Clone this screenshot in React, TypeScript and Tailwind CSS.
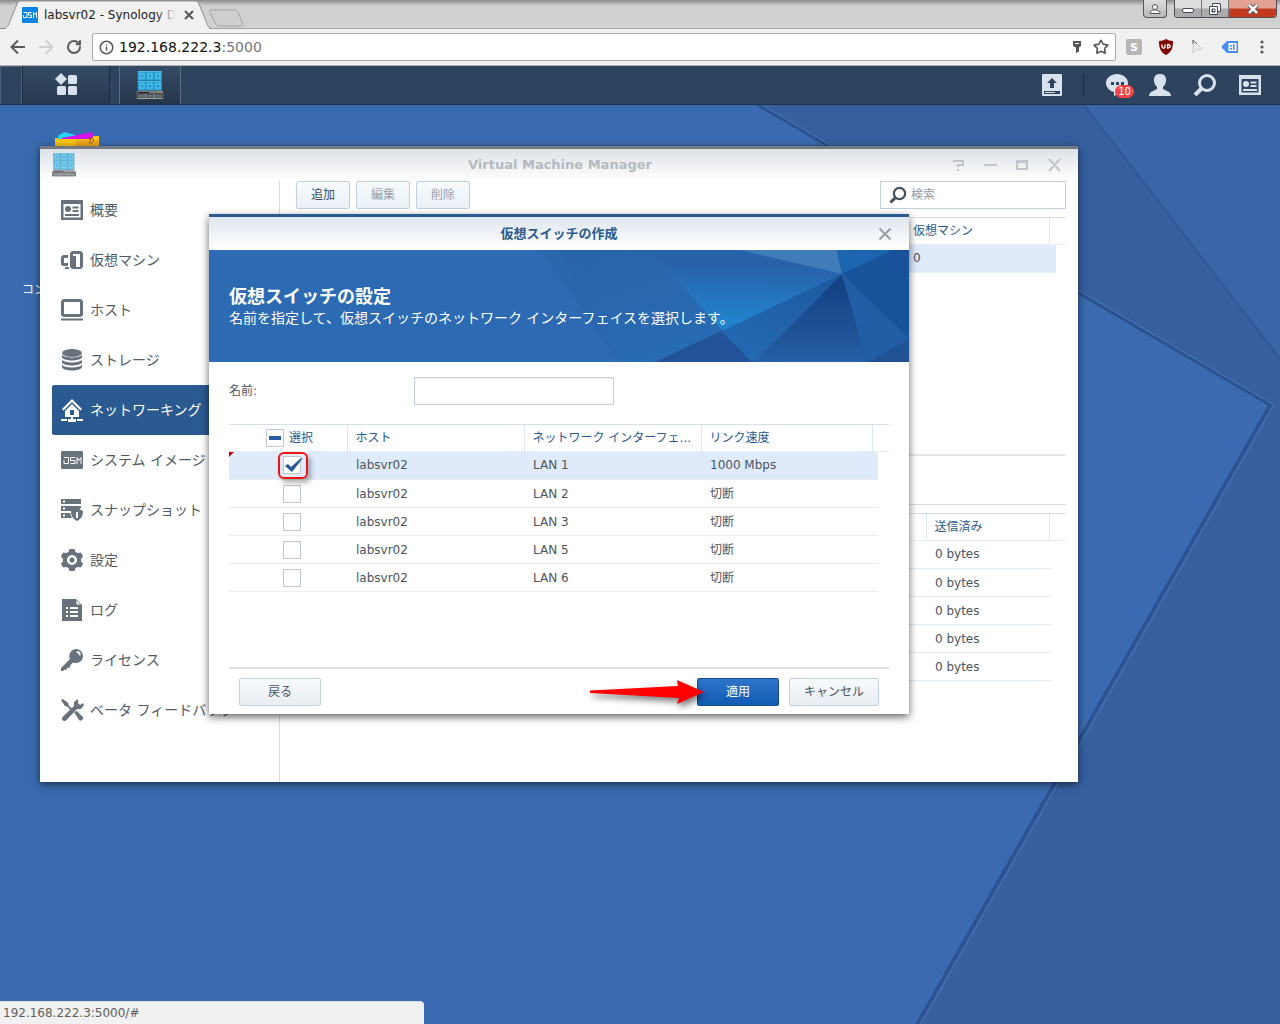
import { useState, type ReactNode } from 'react'
import { Star, RotateCw, Info } from 'lucide-react'
import clsx from 'clsx'

const interfaces = [
  { host: 'labsvr02', name: 'LAN 1', speed: '1000 Mbps' },
  { host: 'labsvr02', name: 'LAN 2', speed: '切断' },
  { host: 'labsvr02', name: 'LAN 3', speed: '切断' },
  { host: 'labsvr02', name: 'LAN 5', speed: '切断' },
  { host: 'labsvr02', name: 'LAN 6', speed: '切断' },
]

function ServerIcon({ className }: { className?: string }) {
  return (
    <svg viewBox="0 0 28 28" className={className}>
      {[0, 1].map(r => (
        <g key={r}>
          <rect x="2" y={r * 10} width="24" height="9.5" fill="#1b8fc4" />
          {[0, 1, 2].map(c => (
            <g key={c}>
              <rect x={2 + c * 8} y={r * 10} width="7.5" height="9" fill="#2fa9dc" stroke="#2594c6" strokeWidth="0.6" />
              <path d={`M${2 + c * 8} ${r * 10 + 0.5}h7.5`} stroke="#4cc0e6" />
              <rect x={4 + c * 8} y={r * 10 + 3} width="4" height="4" fill="#2598cb" stroke="#58c6ea" />
            </g>
          ))}
        </g>
      ))}
      <path d="M2 19.500h24l2 3H0z" fill="#777b7d" />
      <rect y="22" width="28" height="5" fill="#4b5054" />
      <path d="M2 21.500h11" stroke="#222" />
      <path d="M2 25h6M11 25h6M20 25h6" stroke="#8d9295" />
      <path d="M9.500 23v4M18.500 23v4" stroke="#a3a6a8" />
      <path d="M1 27.500h26" stroke="#a3a6a8" />
      <path d="M22 21h1M25 21h1" stroke="#d7df46" />
    </svg>
  )
}

function CardIcon({ className }: { className?: string }) {
  return (
    <svg viewBox="0 0 24 22" className={className} fill="currentColor">
      <path fillRule="evenodd" d="M1 1h22v20H1zM3.500 5v13.500h17V5z" />
      <circle cx="8" cy="10" r="3" />
      <path d="M12.500 7.500h6v2h-6zM12.500 11h6v2h-6zM5 15h14v2H5z" />
    </svg>
  )
}

function SearchIcon({ className }: { className?: string }) {
  return (
    <svg viewBox="0 0 24 24" className={className} fill="none" stroke="currentColor">
      <circle cx="14" cy="10" r="7.500" strokeWidth="3" />
      <path d="M8.500 15.500L2 22" strokeWidth="4" />
    </svg>
  )
}

const navIcons: Record<string, ReactNode> = {
  vm: (
    <>
      <path fillRule="evenodd" d="M12 2h9l2 2v14l-2 2h-9l-2-2V4zM13 5v2h3v11h4V5z" />
      <path d="M8 6H3L1 8v8l2 1h5v-3H4V9h4zM5 18h4v2H5z" />
    </>
  ),
  host: (
    <>
      <path fillRule="evenodd" d="M3 0h18l2 2v14l-2 2H3l-2-2V2zM4 3v12h16V3z" />
      <path d="M1 19.500h22v2H1z" />
    </>
  ),
  storage: (
    <>
      <ellipse cx="12" cy="4" rx="10" ry="4" />
      <path d="M2 5.500c2 4 18 4 20 0v3c-2 4-18 4-20 0zM2 10.500c2 4 18 4 20 0v3c-2 4-18 4-20 0zM2 15.500c2 4 18 4 20 0v3c-2 4-18 4-20 0z" />
    </>
  ),
  network: (
    <>
      <path d="M12 0l10 10-1.500 1.500L12 3l-8.500 8.500L2 10z" />
      <path fillRule="evenodd" d="M12 5l7 7v6H5v-6zM10 11v5h4v-5z" />
      <path d="M11 17h2v3h3v3H8v-3h3zM1 20h6v2H1zM17 20h6v2h-6z" />
    </>
  ),
  image: (
    <>
      <rect x="1" y="2" width="22" height="18" rx="1" />
      <path d="M4 8.500h4.500v6H4v-3.500M15 8.500h-4.500v3H15v3h-4.500M17 15V8.500l2 3 2-3V15" fill="none" stroke="#fff" />
    </>
  ),
  snapshot: (
    <>
      <path fillRule="evenodd" d="M1 0h20v5H1zM3 1.500v2h2v-2zM1 7h20v2l-5 3H1zM3 8.500v2h2v-2zM1 14h9l2 5H1zM3 15.500v2h2v-2z" />
      <path fillRule="evenodd" d="M17 9l6 3c0 5-2 8-6 10-4-2-6-5-6-10zM16 13v6h2v-6z" />
    </>
  ),
  gear: (
    <path
      fillRule="evenodd"
      d="M9.500 0h5l1 3 2.500 1 3-.5 2 4-2 2.500v2.500l2 2-2 4-3-.5-2.500 1-1 3h-5l-1-3-2.500-1-3 .5-2-4 2-2V10L1 7.500l2-4 3 .5 2.500-1zM12 6a5 5 0 1 0 0 10 5 5 0 0 0 0-10zM12 8.500a2.500 2.500 0 1 1 0 5 2.500 2.500 0 0 1 0-5z"
    />
  ),
  log: (
    <path
      fillRule="evenodd"
      d="M2 0h14l6 6v16H2zM16.500 1.500v4h4zM6 8v2h2V8zm4 0v2h8V8zm-4 4v2h2v-2zm4 0v2h8v-2zm-4 4v2h2v-2zm4 0v2h8v-2z"
    />
  ),
  key: (
    <path
      fillRule="evenodd"
      d="M16 0a7 7 0 0 1 0 14c-1 0-2 0-3-.5L10.500 16l-1 3-2-.5-1 2.500-2-.5L3 22H1v-3L10 10a7 7 0 0 1 6-10zm0 3a9 9 0 0 1 4 4c2-3-1-6-4-4z"
    />
  ),
  tools: (
    <>
      <path d="M18 0l-4 3v4L3 17.500c-3 3 1 6 3.500 3.500L17 10h4l3-4-1-2-3 2-2-2z" />
      <path d="M1 1l2-1 5 4 1 3 3 2-2 2-2-3-3-1zM14 13l3-1 6 6c1 2-2 5-4 3z" />
    </>
  ),
}

const navItems = [
  { label: '概要', icon: 'card' },
  { label: '仮想マシン', icon: 'vm' },
  { label: 'ホスト', icon: 'host' },
  { label: 'ストレージ', icon: 'storage' },
  { label: 'ネットワーキング', icon: 'network', active: true },
  { label: 'システム イメージ', icon: 'image' },
  { label: 'スナップショット', icon: 'snapshot' },
  { label: '設定', icon: 'gear' },
  { label: 'ログ', icon: 'log' },
  { label: 'ライセンス', icon: 'key' },
  { label: 'ベータ フィードバック', icon: 'tools' },
]

function BrowserChrome() {
  return (
    <header className="bg-[#f1f1f1]">
      <div className="flex h-[29px] items-start justify-between border-b border-[#a5a5a5] bg-linear-to-b from-[#8c8c8c] via-[#cfcfcf] via-20% to-[#d2d2d2]">
        <div className="flex">
          <div className="relative flex h-[29px] w-[212px] items-center pl-[22px]">
            <svg className="absolute inset-0 h-[29px] w-[212px]" viewBox="0 0 212 29">
              <path d="M0 28.500h5c2-1 3-2 4-5L17 4c1-2 2-3 4-3h174c2 0 3 1 4 3l8 19.500c1 3 2 5 5 5z" fill="#f1f1f1" stroke="#8f8f8f" />
              <path d="M6 28.500h203" stroke="#f1f1f1" strokeWidth="2" />
            </svg>
            <svg className="relative h-4 w-4" viewBox="0 0 16 16">
              <rect width="16" height="16" rx="1" fill="#0a84e4" />
              <path d="M1.500 5.500H5v5H1.500V8M9.500 5.500h-3V8h3v2.500h-3M11.500 11V5.500l1.500 2 1.500-2V11" fill="none" stroke="#fff" />
            </svg>
            <span className="relative ml-1.5 w-[132px] text-xs whitespace-nowrap text-[#222]">
              labsvr02 - Synology D
              <span className="absolute inset-y-0 right-0 w-5 bg-linear-to-r from-transparent to-[#f1f1f1]" />
            </span>
            <button aria-label="タブを閉じる" className="relative ml-2">
              <svg className="h-2.5 w-2.5" viewBox="0 0 10 10">
                <path d="M1 1l8 8M9 1L1 9" stroke="#555" strokeWidth="2" />
              </svg>
            </button>
          </div>
          <button aria-label="新しいタブ" className="mt-1.5">
            <svg className="-ml-1 h-[18px] w-9" viewBox="0 0 36 18">
              <path d="M3 1h23c2 0 3 0 4 2l5 12c0 1 0 2-2 2H11c-2 0-3-1-4-3L2 3c-1-1 0-2 1-2z" fill="#cfcfcf" stroke="#a3a3a3" />
            </svg>
          </button>
        </div>
        <div className="flex gap-[7px] pr-[3px]">
          <button aria-label="ユーザー" className="flex h-[18px] w-6 items-center justify-center rounded-b border border-t-0 border-[#565656] bg-linear-to-b from-[#ddd] to-[#b9b9b9]">
            <svg className="h-3 w-3" viewBox="0 0 12 12" fill="#fff" stroke="#555">
              <path d="M1 10.500V9l3-2h4l3 2v1.500z" />
              <circle cx="6" cy="4" r="2.500" />
            </svg>
          </button>
          <div className="flex h-[18px] overflow-hidden rounded-b border border-t-0 border-[#4e4e57]">
            <button aria-label="最小化" className="flex w-[27px] justify-center border-r border-[#777] bg-linear-to-b from-[#ddd] from-45% to-[#aaa] to-55% pt-[8px]">
              <span className="h-[5px] w-3 rounded-xs border border-[#444b5e] bg-white" />
            </button>
            <button aria-label="元に戻す" className="flex w-[27px] items-center justify-center border-r border-[#777] bg-linear-to-b from-[#ddd] from-45% to-[#aaa] to-55%">
              <svg className="h-3 w-3" viewBox="0 0 12 12" fill="#fff" stroke="#444b5e">
                <path d="M3.500.5h8v8h-8z" />
                <path fillRule="evenodd" d="M.5 3.500h8v8h-8zM3 6v3h3V6z" />
              </svg>
            </button>
            <button aria-label="閉じる" className="flex w-[47px] items-center justify-center bg-linear-to-b from-[#e1a294] from-45% to-[#c23a20] to-55%">
              <svg className="h-3 w-3" viewBox="0 0 12 12">
                <path d="M2 2l8 8M10 2l-8 8" stroke="#444b5e" strokeWidth="4.500" />
                <path d="M2 2l8 8M10 2l-8 8" stroke="#fff" strokeWidth="2.500" />
              </svg>
            </button>
          </div>
        </div>
      </div>

      <div className="flex h-[37px] items-center border-b border-[#b0b0b0] pr-2.5 pl-2.5 text-[#5a5a5a]">
        <button aria-label="戻る">
          <svg className="h-4 w-4" viewBox="0 0 16 16" fill="none" stroke="currentColor" strokeWidth="2">
            <path d="M15 8H2M8 1.500L1.500 8 8 14.500" />
          </svg>
        </button>
        <button aria-label="進む" className="ml-3 text-[#d0d0d0]">
          <svg className="h-4 w-4" viewBox="0 0 16 16" fill="none" stroke="currentColor" strokeWidth="2">
            <path d="M1 8h13M8 1.500L14.500 8 8 14.500" />
          </svg>
        </button>
        <button aria-label="再読み込み" className="ml-3"><RotateCw className="h-4 w-4" strokeWidth={3} /></button>
        <div className="ml-2.5 flex h-7 flex-1 items-center rounded-xs border border-[#a9a9a9] bg-white px-1.5">
          <Info className="h-[15px] w-[15px]" strokeWidth={2.500} />
          <a href="#" className="ml-[5px] flex-1 text-sm text-[#111]">
            192.168.222.3<span className="text-[#777]">:5000</span>
          </a>
          <svg className="h-3.5 w-3" viewBox="0 0 12 14" fill="#555">
            <path fillRule="evenodd" d="M2 1h8v5L8 7.500V12H6v1H5V7.500L2 6zM4 3v1h4V3z" />
          </svg>
          <button aria-label="ブックマーク" className="ml-2.5"><Star className="h-4 w-4" strokeWidth={2.500} /></button>
        </div>
        <div className="ml-2.5 flex items-center gap-4">
          <span className="flex h-4 w-4 items-center justify-center rounded-xs bg-[#b5b5b5] text-[11px] leading-none font-bold text-white">S</span>
          <svg className="h-4 w-4" viewBox="0 0 16 16">
            <path d="M8 0c2 1 4 2 7 2 0 6-1 11-7 14C2 13 1 8 1 2c3 0 5-1 7-2z" fill="#800000" />
            <path d="M4 5.500V8c0 1.500 3 1.500 3 0V5.500M9.500 5.500v3.500c3.500 0 3.500-3.500 0-3.500z" fill="none" stroke="#fff" strokeWidth="1.300" />
          </svg>
          <svg className="h-4 w-4" viewBox="0 0 16 16" fill="#eee" stroke="#c9c9c9">
            <path d="M3 1l9 9-5 .5L3 14z" />
            <path d="M3 1l4 4M3 1v4" stroke="#666" />
          </svg>
          <svg className="h-4 w-4" viewBox="0 0 16 16">
            <path d="M5 2h11v12H5L0 9V7z" fill="#4a8df0" />
            <path d="M6.500 4h8v8h-8z" fill="#fff" />
            <path d="M8 6h2v1.500H8zM8 9h2v1.500H8zM11 5h1.500v6H11zM2.500 7h2v2h-2z" fill="#4a8df0" />
          </svg>
          <svg className="h-4 w-4" viewBox="0 0 16 16" fill="#5a5a5a">
            <circle cx="8" cy="3" r="1.600" />
            <circle cx="8" cy="8" r="1.600" />
            <circle cx="8" cy="13" r="1.600" />
          </svg>
        </div>
      </div>
    </header>
  )
}

function Taskbar() {
  return (
    <nav className="relative flex h-[39px] items-stretch justify-between border-b border-[#1f3149] bg-[#2e435e] text-[#d7e2ee]">
      <div className="flex">
        <div className="w-[22px] border border-b-0 border-[#4b5f78]" />
        <button aria-label="メイン メニュー" className="flex w-[88px] items-center justify-center border-x border-[#1c2c40] bg-linear-to-b from-[#354c66] to-[#27394f]">
          <svg className="h-6 w-6" viewBox="0 0 24 24" fill="currentColor">
            <path d="M7 0l6 6-6 6-6-6z" />
            <rect x="14" y="2" width="9" height="9" rx="1.500" />
            <rect x="3" y="13" width="9" height="9" rx="1.500" />
            <rect x="14" y="13" width="9" height="9" rx="1.500" />
          </svg>
        </button>
        <button aria-label="Virtual Machine Manager" className="ml-[9px] flex w-[62px] items-center justify-center border-x border-[#5a6d83] bg-linear-to-b from-[#354c66] to-[#25364a]">
          <ServerIcon className="h-7 w-7" />
        </button>
      </div>
      <div className="flex items-center pr-[17px]">
        <svg className="h-[22px] w-5" viewBox="0 0 20 22">
          <rect width="20" height="22" rx="1" fill="#d7e2ee" />
          <path d="M10 4l5 5h-3v5H8V9H5zM2 17h16v3H2z" fill="#2c425e" />
          <path d="M3 18h10v1H3z" fill="#d7e2ee" />
        </svg>
        <span className="mx-[21px] h-6 w-px bg-[#1a2b42]" />
        <div className="relative mr-4 h-6 w-7">
          <svg className="h-6 w-7" viewBox="0 0 28 24">
            <path d="M12 1c6 0 11 4 11 9s-4 9-9 9c-1 2-3 3-5 4V19C4 18 1 14 1 10c0-5 5-9 11-9z" fill="#d7e2ee" />
            <path d="M6 9h3v3H6zM11 9h3v3h-3zM16 9h3v3h-3z" fill="#2c425e" />
          </svg>
          <span className="absolute top-3 left-2.5 flex h-[13px] w-[19px] items-center justify-center rounded-full bg-[#f34545] text-[10px] text-white">10</span>
        </div>
        <svg className="mr-[22px] h-6 w-[22px]" viewBox="0 0 22 24" fill="currentColor">
          <path d="M11 1c4 0 6 2 6 6 0 3-1 5-3 7v2l6 3c1 1 2 2 2 4H0c0-2 1-3 2-4l6-3v-2C6 12 5 10 5 7c0-4 2-6 6-6z" />
        </svg>
        <SearchIcon className="mr-5 h-6 w-6" />
        <CardIcon className="h-[22px] w-[26px]" />
      </div>
    </nav>
  )
}

function Wallpaper() {
  return (
    <svg className="absolute inset-0 h-full w-full" viewBox="0 0 1280 919" preserveAspectRatio="none">
      <rect width="1280" height="919" fill="#3a6bb0" />
      <path d="M758 0H1280V919H917L1270 300z" fill="#375f9f" />
      <path d="M1084 0l196 254V0z" fill="#3a66a8" />
      <path d="M758 0l512 300L917 919" fill="none" stroke="#2b5190" strokeWidth="3" />
      <path d="M762 0l512 300L921 919" fill="none" stroke="#4a76b8" />
      <path d="M1084 0l196 254" stroke="#2f5696" strokeWidth="2" />
    </svg>
  )
}

function ToolButton({ children, disabled }: { children: ReactNode; disabled?: boolean }) {
  return (
    <button
      disabled={disabled}
      className="h-7 w-[54px] rounded-xs border border-[#c4cfdd] bg-linear-to-b from-[#f6fafd] to-[#ebf1f7] text-[#414b55] disabled:text-[#9aa3ad]"
    >
      {children}
    </button>
  )
}

function ManagerWindow() {
  return (
    <section className="absolute top-[41px] left-10 flex h-[636px] w-[1038px] flex-col border-t-3 border-[#737983] bg-white shadow-[0_2px_8px_rgba(0,0,0,0.6)]">
      <div className="flex h-8 items-center bg-linear-to-b from-[#dde1e6] to-white pr-4 pl-3 text-[#b4bac1]">
        <ServerIcon className="h-6 w-6 opacity-70" />
        <h1 className="flex-1 pl-[92px] text-center text-[13px] font-bold">Virtual Machine Manager</h1>
        <svg className="h-3.5 w-[110px]" viewBox="0 0 110 14" fill="none" stroke="#c0c5cb" strokeWidth="2">
          <path d="M1 3h10v4H6v2M6 11v2M32 7h13M65 3h10v8H65zM65 4h10M97 1l11 12M108 1L97 13" />
        </svg>
      </div>
      <div className="flex min-h-0 flex-1">
        <ul className="w-60 border-r border-[#d8dbde] pt-1 pl-3 text-sm">
          {navItems.map(item => (
            <li key={item.label}>
              <button
                className={clsx(
                  'flex h-[50px] w-full items-center gap-1.5 rounded-l-xs pl-2 whitespace-nowrap',
                  item.active ? 'bg-[#2a5a90] text-white' : 'text-[#4f5a64]',
                )}
              >
                {item.icon === 'card' ? (
                  <CardIcon className="h-[22px] w-6 text-[#68727d]" />
                ) : (
                  <svg className={clsx('h-6 w-6', item.active ? 'text-white' : 'text-[#68727d]')} viewBox="0 -1 24 24" fill="currentColor">
                    {navIcons[item.icon]}
                  </svg>
                )}
                {item.label}
              </button>
            </li>
          ))}
        </ul>
        <div className="flex flex-1 flex-col pr-3 pl-4">
          <div className="flex gap-1.5">
            <ToolButton>追加</ToolButton>
            <ToolButton disabled>編集</ToolButton>
            <ToolButton disabled>削除</ToolButton>
            <label className="ml-auto flex h-7 w-[186px] items-center border border-[#c4cfdd] pl-2">
              <SearchIcon className="h-[18px] w-[18px] text-[#45505c]" />
              <input aria-label="検索" placeholder="検索" className="ml-1 w-36 outline-none placeholder:text-[#929ba4]" />
            </label>
          </div>
          <div className="mt-2 h-[237px] border-t border-[#d5e0ec]">
            <table className="w-full table-fixed text-left">
              <colgroup>
                <col />
                <col className="w-[144px]" />
                <col className="w-[17px]" />
              </colgroup>
              <thead>
                <tr className="h-[26px] border-b border-[#e6eef6] text-[#2a5a90]">
                  <th />
                  <th className="border-r border-[#dbe7f3] pl-2 font-normal">仮想マシン</th>
                  <th />
                </tr>
              </thead>
            </table>
            <div className="mr-2.5 flex h-7 items-center justify-end border-b border-[#e6eef6] bg-[#dfebfb]">
              <span className="w-[143px]">0</span>
            </div>
          </div>
          <div className="h-[51px] border-t-2 border-b border-[#d9dbdd] border-t-[#e6e8ea]" />
          <div className="mt-2 border-t border-[#d5e0ec]">
            <table className="w-full table-fixed text-left">
              <colgroup>
                <col />
                <col className="w-[123px]" />
                <col className="w-[17px]" />
              </colgroup>
              <thead>
                <tr className="h-[26px] border-b border-[#e6eef6] text-[#2a5a90]">
                  <th className="border-r border-[#dbe7f3]" />
                  <th className="border-r border-[#dbe7f3] pl-2 font-normal">送信済み</th>
                  <th />
                </tr>
              </thead>
            </table>
            <table className="w-[756px] table-fixed">
              <tbody>
                {interfaces.map(row => (
                  <tr key={row.name} className="h-7 border-b border-[#e3ebf3]">
                    <td />
                    <td className="w-[117px]">0 bytes</td>
                  </tr>
                ))}
              </tbody>
            </table>
          </div>
        </div>
      </div>
    </section>
  )
}

function BannerArt() {
  return (
    <svg className="absolute top-0 right-0 h-28 w-[380px]" viewBox="0 0 380 112">
      <defs>
        <linearGradient id="glow" x1="0.600" y1="0" x2="0.500" y2="1">
          <stop offset="0.200" stopColor="#2861aa" />
          <stop offset="0.900" stopColor="#2283cd" />
        </linearGradient>
        <linearGradient id="fold" x1="1" y1="0" x2="0" y2="1">
          <stop offset="0" stopColor="#1d58a0" />
          <stop offset="1" stopColor="#2370b9" />
        </linearGradient>
        <linearGradient id="dark" x1="0.500" y1="0" x2="0.500" y2="1">
          <stop offset="0" stopColor="#123f82" />
          <stop offset="0.700" stopColor="#205496" />
          <stop offset="1" stopColor="#2560a6" />
        </linearGradient>
        <linearGradient id="wash" x1="0" y1="0" x2="1" y2="1">
          <stop offset="0" stopColor="#2a62a9" />
          <stop offset="1" stopColor="#2672bb" />
        </linearGradient>
      </defs>
      <path d="M12 0h368v112H90z" fill="#2a66ae" />
      <path d="M32 0h348L128 112H90z" fill="url(#wash)" />
      <path d="M120 0h260v60l-67-36-119 57z" fill="url(#glow)" />
      <path d="M313 24L127 112h96z" fill="url(#fold)" />
      <path d="M192 81l-66 31h97z" fill="#225398" />
      <path d="M313 24L225 112h114z" fill="url(#dark)" />
      <path d="M211 0h97l5 24z" fill="#417bb8" />
      <path d="M308 0h72l-67 24z" fill="#1b64ae" />
      <path d="M364 0h16v89l-67-65z" fill="#17529b" />
      <path d="M313 24l67 65-42 23z" fill="#215ea5" />
      <path d="M380 89v23h-41z" fill="#205192" />
    </svg>
  )
}

function SwitchDialog() {
  const [selected, setSelected] = useState<string[]>(['LAN 1'])
  const toggle = (name: string) =>
    setSelected(prev => (prev.includes(name) ? prev.filter(n => n !== name) : [...prev, name]))

  return (
    <section
      role="dialog"
      aria-labelledby="dialog-title"
      className="absolute top-[109px] left-[209px] flex h-[500px] w-[700px] flex-col border-t-3 border-[#2a5a90] bg-white shadow-[0_3px_8px_rgba(0,0,0,0.6)]"
    >
      <div className="flex h-[33px] shrink-0 items-center bg-linear-to-b from-[#dfe6ef] to-white pr-[18px] pl-[30px]">
        <h2 id="dialog-title" className="flex-1 text-center text-[13px] font-bold text-[#2a5a90]">仮想スイッチの作成</h2>
        <button aria-label="閉じる">
          <svg className="h-3 w-3" viewBox="0 0 12 12">
            <path d="M.5.5l11 11M11.500.5l-11 11" stroke="#9a9fa5" strokeWidth="2" />
          </svg>
        </button>
      </div>
      <div className="relative flex h-28 shrink-0 flex-col justify-center bg-[#2c6bb3] pl-5 text-white">
        <BannerArt />
        <h3 className="relative text-lg leading-6 font-bold">仮想スイッチの設定</h3>
        <p className="relative text-sm leading-[18px]">名前を指定して、仮想スイッチのネットワーク インターフェイスを選択します。</p>
      </div>
      <div className="flex flex-1 flex-col px-5">
        <div className="mt-[15px] flex h-7 items-center">
          <label htmlFor="switch-name" className="w-[185px]">名前:</label>
          <input id="switch-name" className="h-7 w-[200px] border border-[#c4cfdd] px-2 shadow-[inset_0_1px_1px_#eee] outline-none" />
        </div>
        <div className="relative mt-[19px] flex-1 border-t border-[#d5e0ec]">
          <table className="w-[660px] table-fixed text-left">
            <colgroup>
              <col className="w-[118px]" />
              <col className="w-[177px]" />
              <col className="w-[177px]" />
              <col className="w-[171px]" />
              <col />
            </colgroup>
            <thead>
              <tr className="h-[26px] border-b border-[#e6ecf2] text-[#2a5a90] *:border-r *:border-[#dbe7f3] *:font-normal *:last:border-r-0">
                <th className="pl-[37px]">
                  <label className="flex items-center gap-[5px]">
                    <span className="relative flex h-[18px] w-[18px]">
                      <input type="checkbox" className="h-[18px] w-[18px] appearance-none border border-[#c0c8d6] bg-white" />
                      <span className="pointer-events-none absolute top-[7px] left-[3px] h-1 w-3 bg-[#2a5fa8]" />
                    </span>
                    選択
                  </label>
                </th>
                <th className="pl-2">ホスト</th>
                <th className="pl-2 whitespace-nowrap">ネットワーク インターフェ...</th>
                <th className="pl-2">リンク速度</th>
                <th />
              </tr>
            </thead>
          </table>
          <table className="w-[649px] table-fixed">
            <colgroup>
              <col className="w-[119px]" />
              <col className="w-[177px]" />
              <col className="w-[177px]" />
              <col />
            </colgroup>
            <tbody>
              {interfaces.map(row => {
                const checked = selected.includes(row.name)
                return (
                  <tr key={row.name} className={clsx('h-7 border-b border-[#ececec]', checked && 'bg-[#dfebfb]')}>
                    <td className="pl-[54px]">
                      <span className="relative flex h-[18px] w-[18px]">
                        <input
                          type="checkbox"
                          aria-label={row.name}
                          checked={checked}
                          onChange={() => toggle(row.name)}
                          className="h-[18px] w-[18px] appearance-none border border-[#c0c8d6] bg-white"
                        />
                        {checked && (
                          <svg className="pointer-events-none absolute top-0 left-0 h-[18px] w-5" viewBox="0 0 20 18">
                            <path d="M2 10l3-2 3 3 9-8 3-1-11 14z" fill="#2a5a98" />
                          </svg>
                        )}
                      </span>
                    </td>
                    <td className="pl-2">{row.host}</td>
                    <td className="pl-2">{row.name}</td>
                    <td className="pl-2">{row.speed}</td>
                  </tr>
                )
              })}
            </tbody>
          </table>
          <svg className="absolute top-[27px] left-0 h-[5px] w-[5px]" viewBox="0 0 5 5">
            <path d="M0 0h5L0 5z" fill="#c00000" />
          </svg>
          <span className="pointer-events-none absolute top-[27px] left-[49px] h-[27px] w-[30px] rounded-md border-2 border-[#f01414] shadow-[3px_4px_5px_rgba(0,0,0,0.3)]" />
        </div>
        <div className="flex h-[47px] items-start border-t-2 border-[#dddfe1] px-2.5 pt-[9px]">
          <button className="h-7 w-[82px] rounded-xs border border-[#c4cfdd] bg-linear-to-b from-[#f6fafd] to-[#e9eef4]">戻る</button>
          <div className="relative ml-auto">
            <button className="h-7 w-[82px] rounded-xs border border-[#174d8f] bg-linear-to-b from-[#2e74ca] to-[#115cb4] text-white">適用</button>
            <svg className="pointer-events-none absolute top-0 -left-[108px] h-8 w-[120px] drop-shadow-[2px_4px_3px_rgba(0,0,0,0.5)]" viewBox="0 0 120 32">
              <path d="M1 12.500L89 8l-1-6 27 12-27 12 2-6L1 15z" fill="#f00" />
            </svg>
          </div>
          <button className="ml-2.5 h-7 w-[90px] rounded-xs border border-[#c4cfdd] bg-linear-to-b from-[#f6fafd] to-[#e9eef4]">キャンセル</button>
        </div>
      </div>
    </section>
  )
}

export default function App() {
  return (
    <div className="flex min-h-screen flex-col font-['DejaVu_Sans','Noto_Sans_CJK_JP',sans-serif] text-xs text-[#4b5560]">
      <BrowserChrome />
      <Taskbar />
      <main className="relative flex flex-1 flex-col overflow-hidden bg-[#3a6aae]">
        <Wallpaper />
        <div className="relative pt-[26px] pl-[22px] text-white">
          <svg className="ml-8 h-12 w-12" viewBox="0 0 48 48">
            <path d="M1 7h6l38-2v40H1z" fill="#f6c61a" />
            <path d="M4 5l6-4 12 3v5H4z" fill="#25d5ef" />
            <path d="M8 7l30-6 2 6-2 3H8z" fill="#d812f0" />
            <path d="M1 8h36l3-3h5v40H1z" fill="#fbc70f" />
            <path d="M22 9h23v36H22z" fill="#f5aa1c" />
            <path d="M33 8c4-3 4 3 2 5M36 8c4-2 5 2 1 5" fill="none" stroke="#8a5a12" />
          </svg>
          <div className="mt-[103px]">コン</div>
        </div>
        <ManagerWindow />
        <SwitchDialog />
        <footer className="relative mt-auto h-[23px] w-[424px] rounded-tr-sm border-t border-[#dcdcdc] bg-[#f1f1f1] pt-[3px] pl-[3px] text-[#5f5f5f]">
          192.168.222.3:5000/#
        </footer>
      </main>
    </div>
  )
}
